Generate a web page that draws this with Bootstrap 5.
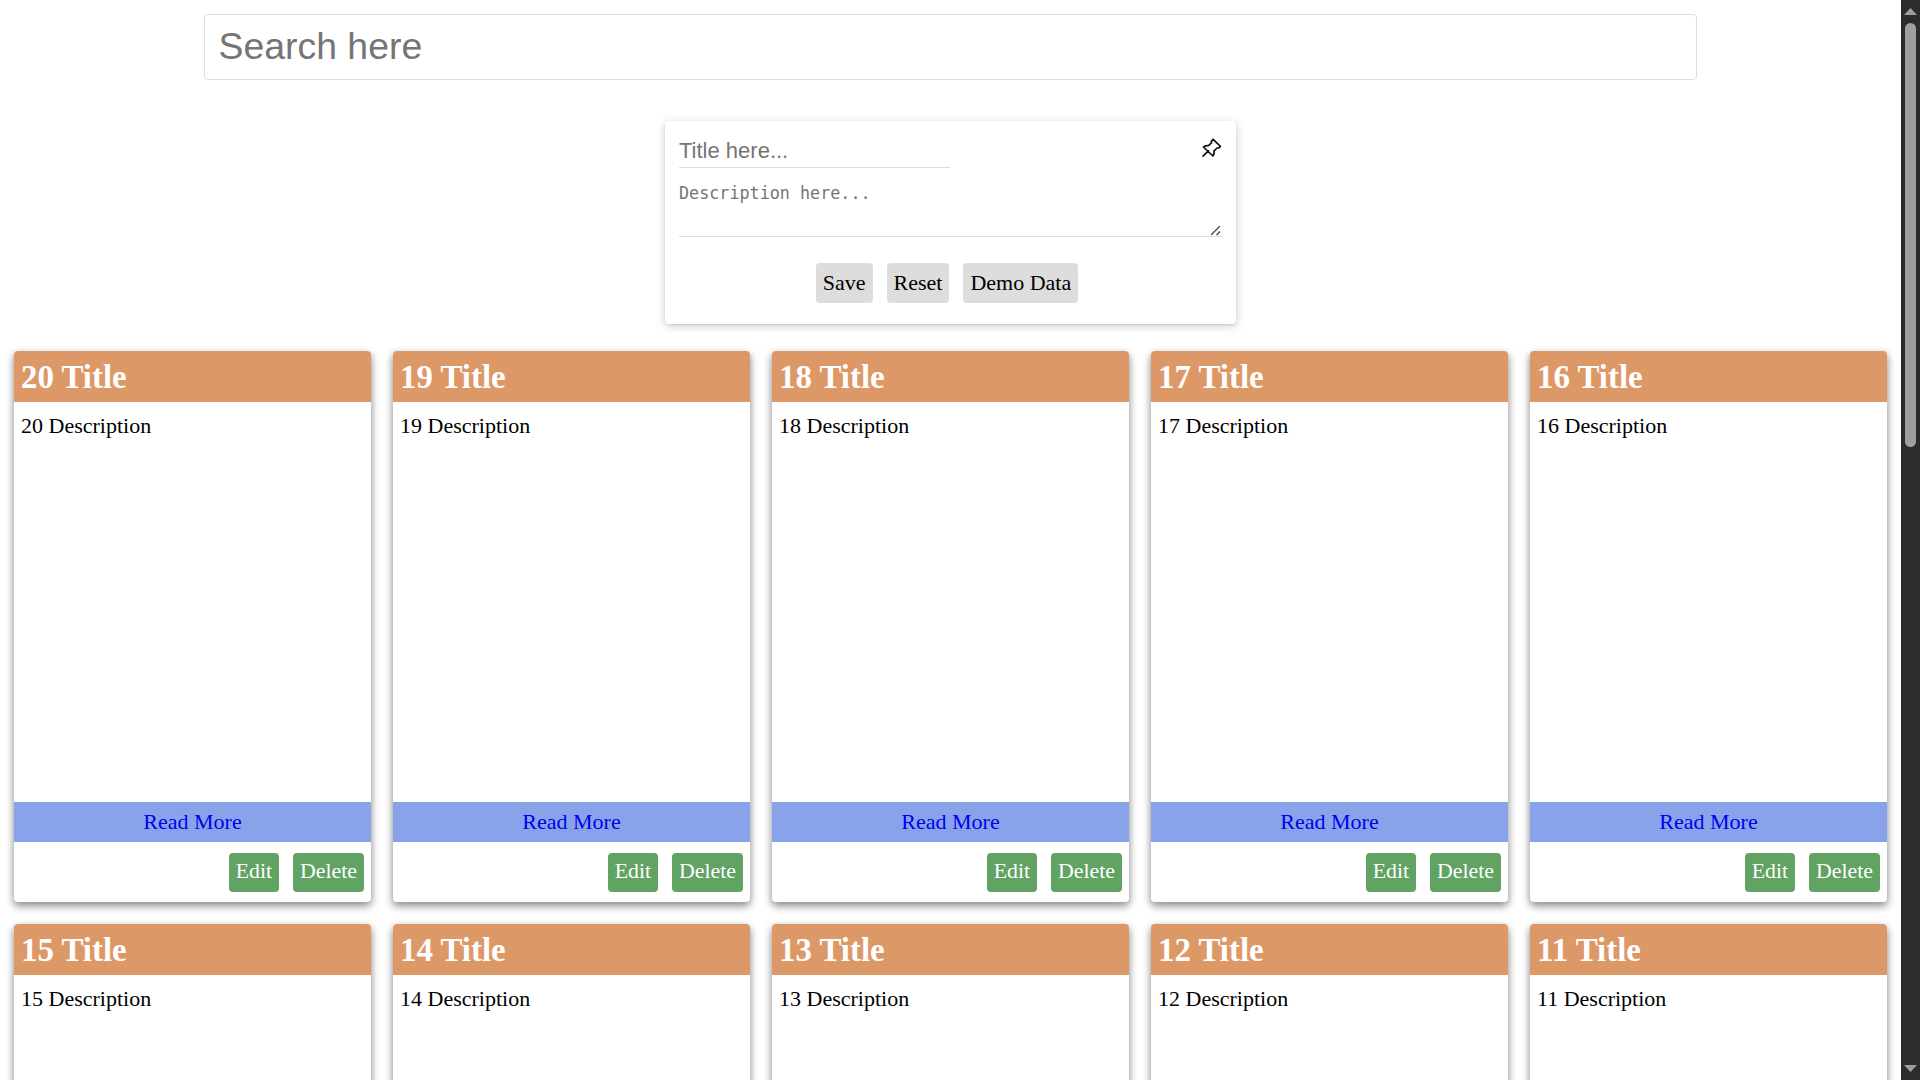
<!DOCTYPE html>
<html lang="en">
<head>
<meta charset="utf-8">
<meta name="viewport" content="width=device-width, initial-scale=1">
<title>Notes</title>
<link rel="stylesheet" href="https://cdn.jsdelivr.net/npm/bootstrap@5.3.0/dist/css/bootstrap.min.css">
<style>
  body { font-family: "Liberation Serif", serif; font-size: 22px; line-height: 25px; color: #000; background: #fff; }
  .page { padding: 14px 14px 0; }
  .search-box { width: 1493px; height: 66px; border: 1px solid #ddd; border-radius: 4px; padding: 0 14px 2px 13.5px; font: 37.4px "Liberation Sans", sans-serif; outline: 0; }
  ::placeholder { color: #757575; opacity: 1; }
  .note-form { width: 571px; height: 203px; margin-top: 41px; padding: 14px; border-radius: 4px; box-shadow: rgba(50,50,93,.25) 0 2px 8px 0, rgba(0,0,0,.2) 0 1px 3px -1px; }
  .title-input { width: 271px; height: 33px; border: 0; border-bottom: 1px solid #ddd; padding: 0; font: 22px "Liberation Sans", sans-serif; }
  .pin { margin-top: 3px; }
  .desc-wrap { height: 62px; margin-top: 7px; }
  .desc-input { height: 62px; border: 0; border-bottom: 1px solid #ddd; padding: 7px 0; resize: none; font: 16.75px/23px "DejaVu Sans Mono", monospace; overflow: hidden; }
  .grip { right: 1px; bottom: 1px; }
  .form-actions { gap: 14px; margin-top: 26px; padding-right: 7px; }
  .action { border: 0; border-radius: 4px; padding: 7px 7px 8px; background: #ddd; color: #000; line-height: 25px; }
  .notes { display: grid; grid-template-columns: repeat(5, 357px); gap: 22px; margin-top: 27px; }
  .note { height: 551px; border-radius: 4px; overflow: hidden; background: #fff; box-shadow: rgba(0,0,0,.3) 0 4px 10px, rgba(0,0,0,.24) 0 3px 7px; }
  .note h2 { height: 51px; margin: 0; padding: 7px; background: #dd9868; color: #fff; font-size: 32.9px; font-weight: 700; line-height: 38px; }
  .note-text { padding: 11px 7px; }
  .read-more { height: 40px; padding: 7px; background: #88a3ea; color: #00e; }
  .note-actions { height: 60px; gap: 14px; padding: 11px 7px 10px; }
  .note-actions .action { background: #61a363; color: #fff; padding: 6px 7px 8px; font-size: 21.8px; }
  .scroll-track { width: 19px; background: #2c2c2c; padding: 8px 3px; }
  .scroll-thumb { width: 11px; height: 424px; margin-top: 8px; border-radius: 6px; background: #9f9f9f; }
</style>
</head>
<body class="vh-100 overflow-hidden d-flex">
<main class="page flex-grow-1 vh-100 overflow-hidden">
  <div class="d-flex justify-content-center"><input class="search-box" placeholder="Search here" aria-label="Search"></div>
  <form class="note-form mx-auto">
    <div class="d-flex justify-content-between align-items-start">
      <input class="title-input" placeholder="Title here..." aria-label="Title">
      <svg class="pin" width="21" height="20" viewBox="0 0 21 20" fill="none" stroke="#111" stroke-width="1.7" stroke-linejoin="round" stroke-linecap="round" aria-hidden="true"><path d="M2 18.1 7.4 12.8M2.5 9 Q4.8 7.5 7.4 7.7L10.5 4.8Q10 2.8 12.2 1.3L19.4 8.3Q18.5 10.2 16 10L12.9 13.1Q13.7 15.7 11.9 18Z"/></svg>
    </div>
    <div class="desc-wrap position-relative">
      <textarea class="desc-input w-100 d-block" placeholder="Description here..." aria-label="Description"></textarea>
      <svg class="grip position-absolute" width="10" height="10" viewBox="0 0 10 10" stroke="#444" stroke-width="1.3" aria-hidden="true"><path d="M0 9 9 0M5.5 9 9 5.5"/></svg>
    </div>
    <div class="form-actions d-flex justify-content-center">
      <button type="button" class="action">Save</button><button type="button" class="action">Reset</button><button type="button" class="action">Demo Data</button>
    </div>
  </form>
  <section class="notes" id="notes"></section>
</main>
<aside class="scroll-track flex-shrink-0 vh-100 d-flex flex-column align-items-center" aria-hidden="true">
  <svg class="flex-shrink-0" width="13" height="7" viewBox="0 0 13 7" fill="#9f9f9f"><path d="M0 7 6.5 0 13 7Z"/></svg>
  <div class="scroll-thumb flex-shrink-0"></div>
  <svg class="mt-auto flex-shrink-0" width="13" height="7" viewBox="0 0 13 7" fill="#9f9f9f"><path d="M0 0H13L6.5 7Z"/></svg>
</aside>
<script src="https://cdn.jsdelivr.net/npm/bootstrap@5.3.0/dist/js/bootstrap.bundle.min.js"></script>
<script>
  const notes = document.getElementById('notes');
  const footer = `<a class="read-more d-block text-center text-decoration-none" href="#">Read More</a>
      <div class="note-actions d-flex justify-content-end"><button class="action">Edit</button><button class="action">Delete</button></div>`;
  // Only the first row's footers fall inside the viewport.
  for (let n = 20; n > 10; n--) {
    notes.insertAdjacentHTML('beforeend', `<article class="note d-flex flex-column">
      <h2>${n} Title</h2>
      <div class="note-text flex-grow-1">${n} Description</div>
      ${n > 15 ? footer : ''}
    </article>`);
  }
</script>
</body>
</html>
